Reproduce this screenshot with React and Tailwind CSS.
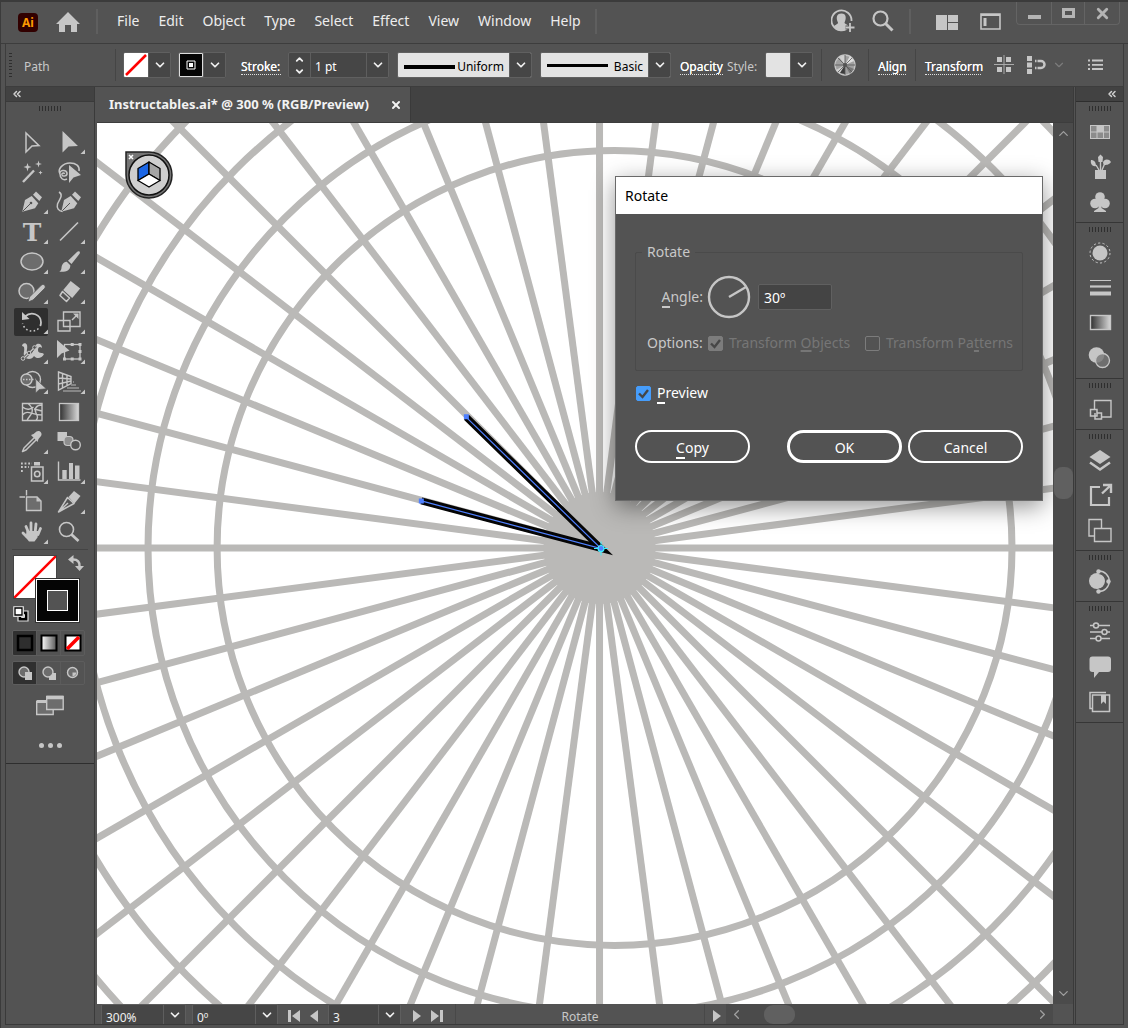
import React from 'react';
import { ChevronDown, ChevronUp, ChevronLeft, ChevronRight, ChevronsLeft, X } from 'lucide-react';

const INK = '#c6c6c6';

const rays = Array.from({ length: 48 }, (_, i) => {
  const a = (i * 7.5 * Math.PI) / 180;
  return [599.5 + 900 * Math.cos(a), 547.5 + 900 * Math.sin(a)];
});

const rings = [397, 466, 535, 604, 673];

const menus = ['File', 'Edit', 'Object', 'Type', 'Select', 'Effect', 'View', 'Window', 'Help'];

const penBody = 'M8.3 23.7 L11 12 L17.7 8 L24.3 15.3 L21 20.3 Z';
const penCap = 'M19 6.7 L22 3.5 L28 9.3 L25.3 13 Z';

// each drawing sits in a 34 x 28 box
const tools = [
  { name: 'Selection', art: <path d="M12 5v19l6-6 7-.4z" fill="none" strokeWidth="1.5" /> },
  { name: 'Direct Selection', more: true, art: <path d="M11.5 3v21.5l6-6 9.5-.5z" stroke="none" /> },
  {
    name: 'Magic Wand',
    art: (
      <>
        <path d="M9 24 20 12.5" strokeWidth="2.4" />
        <path d="m13.5 5 1 3 3 1-3 1-1 3.500-1-3.500-3-1 3-1zM24.500 2.500l.8 2.700 2.700.8-2.700.8-.8 2.700-.8-2.700L21 6l2.700-.8zM26.500 12.500l.6 1.500 1.500.6-1.500.6-.6 1.500-.6-1.500-1.500-.6 1.500-.6z" stroke="none" />
      </>
    ),
  },
  {
    name: 'Lasso',
    art: (
      <>
        <path d="M9 16c-3-5 3-11 10-11 6 0 10 3 9 8M9 16c-1-4 6-5 7-1 .5 3-4 4-5 2-.6-2 2-2.500 2.500-1M9 16c0 4 3 7 7 5" fill="none" strokeWidth="1.500" />
        <path d="M18 7v18l4.500-5.500 7.500-2.500z" stroke="none" />
      </>
    ),
  },
  {
    name: 'Pen',
    more: true,
    art: (
      <>
        <path d={penBody} stroke="none" />
        <path d={penCap} stroke="none" />
        <path d="m9 23 8-8" stroke="#535353" />
        <circle cx="17" cy="15" r="1.300" fill="#535353" stroke="none" />
      </>
    ),
  },
  {
    name: 'Curvature',
    art: (
      <>
        <g transform="translate(2 0)">
          <path d={penBody} stroke="none" />
          <path d={penCap} stroke="none" />
          <path d="m9 23 8-8" stroke="#535353" />
        </g>
        <path d="M8 4c5 3 0 8-1.500 12-1 4 1 7 5 7.500" fill="none" strokeWidth="1.500" />
      </>
    ),
  },
  {
    name: 'Type',
    more: true,
    art: <text x="18" y="23" textAnchor="middle" fontFamily="'DejaVu Serif', serif" fontWeight="bold" fontSize="25" stroke="none">T</text>,
  },
  { name: 'Line Segment', more: true, art: <path d="M9 22.500 27 4.500" strokeWidth="1.600" /> },
  { name: 'Ellipse', more: true, art: <ellipse cx="18" cy="13.500" rx="11" ry="8.500" fill="#6d6d6d" strokeWidth="1.500" /> },
  {
    name: 'Paintbrush',
    more: true,
    art: <path d="M28.500 3.500c.8.800.3 2-.3 2.700L20.500 16 17 12.700l9-8.700c.8-.8 1.800-1.200 2.500-.5zM15.800 13.800l3.500 3.500c.2 4-3 7-11 6.500 3-2 1.500-4 3-7 1-2 3-3.200 4.500-3z" stroke="none" />,
  },
  {
    name: 'Shaper',
    more: true,
    art: (
      <>
        <circle cx="12.500" cy="13" r="7.500" fill="#6d6d6d" strokeWidth="1.500" />
        <path d="m14 24 1.500-5L27.500 7c2-1.500 4.500.5 3.500 3L19 22z" stroke="#535353" strokeWidth=".8" />
      </>
    ),
  },
  {
    name: 'Eraser',
    more: true,
    art: (
      <>
        <path d="m19.700 3 9.500 7.500-8 9.500-9-8z" stroke="none" />
        <path d="m11.500 13.500 7 6.500-3 3.500-6.500-6z" fill="none" strokeWidth="1.500" strokeLinejoin="round" />
      </>
    ),
  },
  {
    name: 'Rotate',
    more: true,
    active: true,
    art: (
      <>
        <path d="M11 8.500c6-5.500 16-2.500 16 6 0 1.500-.3 2.500-.8 3.500" fill="none" strokeWidth="1.800" />
        <path d="M24.500 20.500c-5 5-14 2.500-16-5" fill="none" strokeWidth="1.600" strokeDasharray="1.600 2.300" />
        <path d="M8 4v8l7.500-1z" stroke="none" />
      </>
    ),
  },
  {
    name: 'Scale',
    more: true,
    art: (
      <>
        <path d="M12.500 12.500v-8.500h16.500v14.500h-10M7 12.500h12v10.500H7zM12.500 12.500v6h6.500" fill="none" strokeWidth="1.400" />
        <path d="m21 12 5-5" strokeWidth="1.500" />
        <path d="M22 5.500h5.500V11z" stroke="none" />
      </>
    ),
  },
  {
    name: 'Width',
    more: true,
    art: (
      <>
        <path d="M8 8c0-3 4-4 5-1 1 4-2 8 2 9 5 1 4-8 8-10 3-1 5 1 5 4-2-2-4-1-4 2 0 4 4 2 6 4-2 5-8 5-10 2-2 4-8 4-10 0-1-3 1-6 0-9-1-1-2-1-2-1z" stroke="none" />
        <path d="M9 21 22 8" stroke="#535353" strokeWidth="3" />
        <path d="M9 21 20 10" strokeWidth="1.300" />
        <circle cx="9" cy="20.500" r="1.800" fill="#535353" />
        <circle cx="15" cy="15" r="1.800" fill="#535353" />
        <circle cx="20.500" cy="9.500" r="1.800" fill="#535353" />
      </>
    ),
  },
  {
    name: 'Free Transform',
    more: true,
    art: (
      <>
        <rect x="13.500" y="6.500" width="15.500" height="14.500" fill="none" strokeWidth="1.300" />
        <path d="M12 19.500h3v3h-3zM27.500 19.500h3v3h-3zM27.500 5h3v3h-3zM19.700 5h3v3h-3zM19.700 19.500h3v3h-3zM27.500 12h3v3h-3z" stroke="none" />
        <path d="M6 2v18l4.500-4.500 8-3z" stroke="none" />
      </>
    ),
  },
  {
    name: 'Shape Builder',
    more: true,
    art: (
      <>
        <circle cx="18.500" cy="11.500" r="8" fill="none" strokeWidth="1.400" />
        <circle cx="12.500" cy="11.500" r="5.500" fill="#6d6d6d" strokeWidth="1.400" />
        <path d="M9 11.500h13" strokeWidth="1.400" strokeDasharray="1.500 1.500" />
        <path d="M21.700 11v14l3.500-3.500 7-.8z" stroke="#535353" strokeWidth=".6" />
      </>
    ),
  },
  {
    name: 'Perspective Grid',
    more: true,
    art: (
      <>
        <path d="m7.500 4 12.500 4.500v7L7.500 22zM11.500 5.500v14.500M16 7v10.500M7.500 10l12.500 1M7.500 16l12.500-3" fill="none" strokeWidth="1.400" />
        <path d="M20 17h5M16 20h12M12 23h18M22 14h1" stroke="#989898" strokeWidth="1.300" />
      </>
    ),
  },
  {
    name: 'Mesh',
    art: (
      <path d="M8.500 5.500h19.500v17H8.500zM14 5.500c4 3 5 6 4 9s-4 5-5 8M28 7c-6 0-8 4-6 8s2 5 0 7.500M8.500 9c5 4 8 2 11 0M8.500 17c5-6 9 0 19.500 0M20 11l8 2" fill="none" strokeWidth="1.400" />
    ),
  },
  { name: 'Gradient', art: <rect x="8.500" y="5.500" width="19" height="17" fill="url(#fade)" strokeWidth="1.300" /> },
  {
    name: 'Eyedropper',
    more: true,
    art: (
      <>
        <path d="m20 10-10 10-1.500 3.500 3.500-1.500 10-10" fill="none" strokeWidth="1.500" strokeLinejoin="round" />
        <path d="m17 7 2.500-1 3-2.500c3-2 6.500 1.500 4.500 4.500L24.500 11l-1 3z" stroke="none" />
      </>
    ),
  },
  {
    name: 'Blend',
    art: (
      <>
        <path d="M6.500 4h9.500v9h-9.500z" stroke="none" />
        <rect x="13" y="8.500" width="9" height="9" rx="3.500" fill="#8e8e8e" strokeWidth="1.200" />
        <circle cx="24.500" cy="17" r="4.800" fill="#535353" strokeWidth="1.400" />
      </>
    ),
  },
  {
    name: 'Symbol Sprayer',
    more: true,
    art: (
      <>
        <rect x="17.500" y="9" width="11.500" height="14" fill="none" strokeWidth="1.500" />
        <path d="M20 7.500V4h6v3.500z" stroke="none" />
        <circle cx="23.200" cy="16" r="2.700" fill="none" strokeWidth="1.600" />
        <path d="M7 5.500h11M7 9h8M7 13h2" strokeWidth="1.800" strokeDasharray="1.800 1.800" />
      </>
    ),
  },
  {
    name: 'Column Graph',
    more: true,
    art: (
      <>
        <path d="M7.500 3.500V22h22" fill="none" strokeWidth="1.400" />
        <path d="M11.300 12h4.400v9h-4.400zM18 5h4v16h-4zM24 7.500h4.500V21H24z" stroke="none" />
      </>
    ),
  },
  {
    name: 'Artboard',
    art: (
      <>
        <path d="M12.500 9h10.500l4 4v9.500H12.500z" fill="#6d6d6d" strokeWidth="1.400" />
        <path d="M22.500 9v4.500H27z" stroke="none" />
        <path d="M5.500 9h5.500M12.500 2v5.500" strokeWidth="1.400" />
      </>
    ),
  },
  {
    name: 'Slice',
    more: true,
    art: (
      <>
        <path d="M7.500 24 16.500 9.500 23 15.500zM7.500 24 17 15" fill="none" strokeWidth="1.500" strokeLinejoin="round" />
        <path d="m17.500 9 5.500-6 6.500 5-6 7.500z" stroke="none" />
      </>
    ),
  },
  {
    name: 'Hand',
    more: true,
    art: (
      <>
        <path d="M12 8.500l2.500 6M17 5v9M22 6l-.8 8M26.500 10.500l-2.500 6M9 15l4 4" strokeWidth="2.800" strokeLinecap="round" />
        <path d="M12.500 13h12l-1 6.500-3 4h-5.500L9 16l3 1z" stroke="none" />
      </>
    ),
  },
  {
    name: 'Zoom',
    art: (
      <>
        <circle cx="15.500" cy="11.500" r="7" fill="none" strokeWidth="1.600" />
        <path d="m20.500 16.500 7 6.500" strokeWidth="2.800" />
      </>
    ),
  },
];

// dock drawings sit in a 28 x 28 box
const docks = [
  [
    {
      name: 'Swatches',
      art: (
        <>
          <rect x="4.500" y="7.500" width="19" height="13" fill="#8c8c8c" />
          <path d="M11 8h6v6h-6z" stroke="none" />
          <path d="M4.500 14h19M11 8v12M17.500 8v12" />
        </>
      ),
    },
    {
      name: 'Brushes',
      art: (
        <>
          <path d="M9 17h11v9H9zM5 7c3 0 5 2 5 6C7 14 4 11 5 7zM12 4l2.500-2.500L17 4l-.5 5h-4zM17 10c0-4 6-5 8-1-2 3-5 3-7 3z" stroke="none" />
          <path d="M10 12l3 5M14.500 7v10M19 10l-3 7" strokeWidth="1.400" />
        </>
      ),
    },
    {
      name: 'Symbols',
      art: (
        <>
          <circle cx="14" cy="9" r="4.800" stroke="none" />
          <circle cx="9" cy="15.500" r="4.800" stroke="none" />
          <circle cx="19" cy="15.500" r="4.800" stroke="none" />
          <path d="M12.500 10h3v10l4.500 3v1H8v-1l4.500-3z" stroke="none" />
        </>
      ),
    },
  ],
  [
    {
      name: 'Appearance',
      art: (
        <>
          <circle cx="14" cy="14" r="7.500" stroke="none" />
          <circle cx="14" cy="14" r="10" fill="none" strokeDasharray="2.200 2.290" />
        </>
      ),
    },
    {
      name: 'Stroke',
      art: (
        <>
          <path d="M4 6.500h21" />
          <path d="M4 12.500h21" strokeWidth="2.200" />
          <path d="M4 19.500h21" strokeWidth="4" />
        </>
      ),
    },
    { name: 'Gradient', art: <rect x="4.500" y="6.500" width="20" height="14" fill="url(#fade)" strokeWidth="1.400" /> },
    {
      name: 'Transparency',
      art: (
        <>
          <circle cx="10.500" cy="11" r="7.800" stroke="none" />
          <circle cx="16.500" cy="16.500" r="7" fill="#777777" fillOpacity=".8" strokeWidth="1.300" />
        </>
      ),
    },
  ],
  [
    {
      name: 'Asset Export',
      art: (
        <>
          <path d="M8.500 14V5.500h16.500v16.500H16" fill="none" strokeWidth="1.400" />
          <path d="M4.500 14.500h6.500v6.500H4.500zM9 18v6h6.500v-6h-4.500" fill="none" strokeWidth="1.500" />
        </>
      ),
    },
  ],
  [
    {
      name: 'Layers',
      art: (
        <>
          <path d="m14 4 10.500 7L14 18 3.500 11z" stroke="none" />
          <path d="m4 16.500 10 7 10-7" fill="none" strokeWidth="2.500" />
        </>
      ),
    },
    {
      name: 'Export',
      art: (
        <>
          <path d="M14 6H5v18h18v-8" fill="none" strokeWidth="2.200" />
          <path d="m16 12.500 8.500-8M17 4h8v8" fill="none" strokeWidth="2.400" />
        </>
      ),
    },
    {
      name: 'Artboards',
      art: (
        <>
          <path d="M3 3.500h12.500v16.500H3z" fill="none" strokeWidth="1.400" />
          <path d="M8.500 12.500H25v13H8.500z" fill="#535353" strokeWidth="1.400" />
        </>
      ),
    },
  ],
  [
    {
      name: 'CC Libraries',
      art: (
        <>
          <circle cx="11" cy="14" r="8" stroke="none" />
          <path d="M13 4.500a9.800 9.800 0 0 1 0 19.500" fill="none" stroke="#535353" strokeWidth="5" />
          <path d="M13 4a10 10 0 0 1 0 20.500" fill="none" strokeWidth="1.500" />
          <circle cx="12.500" cy="4.500" r="2.200" stroke="none" />
          <circle cx="22.500" cy="14.500" r="2.200" stroke="none" />
          <circle cx="12.500" cy="24.500" r="2.200" stroke="none" />
        </>
      ),
    },
  ],
  [
    {
      name: 'Properties',
      art: (
        <>
          <path d="M4 7.500h20M4 14h20M4 20.500h20" strokeWidth="1.400" />
          <circle cx="10" cy="7.500" r="2.500" fill="#535353" strokeWidth="1.500" />
          <circle cx="18.500" cy="14" r="2.500" fill="#535353" strokeWidth="1.500" />
          <circle cx="12.500" cy="20.500" r="2.500" fill="#535353" strokeWidth="1.500" />
        </>
      ),
    },
    { name: 'Comments', art: <path d="M6.500 3.500h15.500a3 3 0 0 1 3 3V16a3 3 0 0 1-3 3H13l-5 6v-6H6.500a3 3 0 0 1-3-3V6.500a3 3 0 0 1 3-3z" stroke="none" /> },
    {
      name: 'Libraries',
      art: (
        <>
          <path d="M20 4.500H4v16h2.500M6.500 7H23.500v16.500H6.500z" fill="none" strokeWidth="1.500" />
          <path d="M15 7h5v9l-2.500-2.500-2.500 2.500z" stroke="none" />
        </>
      ),
    },
  ],
];

const Grip = () => (
  <span className="flex h-[5px] justify-center gap-[2px]">
    {Array.from({ length: 8 }, (_, i) => (
      <span key={i} className="w-px bg-[#2e2e2e]" />
    ))}
  </span>
);

const Rule = () => <span className="h-8 w-px shrink-0 bg-[#454545]" />;

const Chevron = () => (
  <span className="pointer-events-none absolute inset-y-0 right-0 flex w-[22px] items-center justify-center border-l border-[#5e5e5e] bg-[#464646]">
    <ChevronDown size={14} strokeWidth={3} className="text-[#f0f0f0]" />
  </span>
);

const frame = 'relative flex h-[26px] shrink-0 overflow-hidden rounded-xs border border-[#606060]';

const SwatchButton = ({ label, children }) => (
  <button aria-label={label} className={`${frame} w-12 bg-[#464646]`}>
    <span className="flex h-full w-[24px] items-center justify-center">{children}</span>
    <Chevron />
  </button>
);

const StrokeSelect = ({ label, value, width, line }) => (
  <div className={`${frame} ${width} items-center bg-[#e3e3e3]`}>
    <span className={`${line} pointer-events-none absolute left-[6px] bg-black`} />
    <select aria-label={label} className="h-full w-full appearance-none pt-1 pr-[27px] text-right text-xs text-black [text-align-last:right]">
      <option>{value}</option>
    </select>
    <Chevron />
  </div>
);

const StatusSelect = ({ label, value, width }) => (
  <div className={`relative flex h-5 shrink-0 overflow-hidden rounded-t-xs border border-b-0 border-[#5e5e5e] bg-[#464646] ${width}`}>
    <select aria-label={label} className="w-full appearance-none pt-[5px] pl-1 text-xs leading-4 text-[#f0f0f0]">
      <option>{value}</option>
    </select>
    <Chevron />
  </div>
);

const TitleBar = () => (
  <header className="flex h-[42px] shrink-0 items-start border-b border-[#3d3d3d] pr-[8px] pl-[17px]">
    <span className="mt-[11px] flex h-[19px] w-5 items-center justify-center rounded bg-[#310000] text-[12px] font-bold text-[#ff9a00]">Ai</span>
    <button aria-label="Home" className="mt-[10px] ml-[18px]">
      <svg width="24" height="20" fill={INK}>
        <path d="M12 0 24 12h-3v8h-6v-7H9v7H3v-8H0z" />
      </svg>
    </button>
    <span className="mt-[7px] ml-4 h-[25px] w-[2px] bg-[#5f5f5f]" />
    <nav className="mt-2 ml-[19px] flex gap-[19px] text-[14px] leading-[22px] text-[#ededed]">
      {menus.map((m) => (
        <button key={m}>{m}</button>
      ))}
    </nav>
    <span className="mt-[7px] ml-[14px] h-[25px] w-[2px] bg-[#5f5f5f]" />
    <div className="ml-auto flex items-start">
      <button aria-label="Account" className="mt-[7px]">
        <svg width="24" height="24" fill="none" stroke={INK}>
          <path d="M18 18A10 10 0 1 1 20.500 12" strokeWidth="1.800" />
          <path d="M10.500 4.500c5 0 5 5 3 9 0 2 3 1 4 4l-4 4H7l-4-4c1-2 4-2 4-4-2-4-2-9 3.500-9z" fill={INK} stroke="none" />
          <path d="M19 14v9M14.500 18.500h9" stroke="#535353" strokeWidth="4" />
          <path d="M19 14v9M14.500 18.500h9" strokeWidth="1.800" />
        </svg>
      </button>
      <button aria-label="Search" className="mt-[8px] ml-[17px]">
        <svg width="22" height="22" fill="none" stroke={INK}>
          <circle cx="8.500" cy="8.500" r="7" strokeWidth="2.200" />
          <path d="m13.500 13.500 7 7" strokeWidth="3" />
        </svg>
      </button>
      <span className="mt-[7px] ml-[15px] h-[25px] w-[2px] bg-[#5f5f5f]" />
      <button aria-label="Arrange documents" className="mt-[13px] ml-[25px]">
        <svg width="22" height="15" fill={INK}>
          <path d="M0 0h11v15H0zM12 0h10v7H12zM12 8h10v7H12z" />
        </svg>
      </button>
      <button aria-label="Workspace" className="mt-[11px] ml-[22px]">
        <svg width="21" height="17" fill="none" stroke={INK}>
          <path d="M1 1h19v15H1z" strokeWidth="1.600" />
          <path d="M1 2h19" strokeWidth="2" />
          <path d="M3.500 5h3v8h-3z" fill={INK} stroke="none" />
        </svg>
      </button>
      <div className="ml-[15px] flex h-[23px] rounded-b border border-t-0 border-[#646464] text-[#b4b4b4]">
        <button aria-label="Minimize" className="flex w-[34px] items-center justify-center"><span className="mt-2 h-1 w-[13px] bg-current" /></button>
        <button aria-label="Maximize" className="flex w-[34px] items-center justify-center border-x border-[#646464]"><span className="h-[10px] w-[13px] border-[3px] border-current" /></button>
        <button aria-label="Close" className="flex w-[34px] items-center justify-center"><X size={17} strokeWidth={4} /></button>
      </div>
    </div>
  </header>
);

const linkStyle = 'mt-[5px] border-b border-dotted border-[#e0e0e0] leading-[14px] text-white whitespace-nowrap [text-shadow:0_0_0.6px_#fff]';

const ControlBar = () => (
  <section className="mr-1 ml-[4px] flex h-[43px] shrink-0 items-center border-x border-b border-[#3d3d3d] pl-[3px] text-xs text-[#c8c8c8]">
    <span className="flex h-6 w-[3px] flex-col justify-between">
      {Array.from({ length: 8 }, (_, i) => (
        <span key={i} className="h-px bg-[#2e2e2e]" />
      ))}
    </span>
    <span className="mt-[3px] ml-3 w-[91px]">Path</span>
    <Rule />
    <div className="ml-[7px] flex gap-[7px]">
      <SwatchButton label="Fill">
        <svg width="24" height="24"><path d="M0 0h24v24H0z" fill="#fff" /><path d="M2 22 22 2" stroke="#f00" strokeWidth="2.500" /></svg>
      </SwatchButton>
      <SwatchButton label="Stroke colour">
        <svg width="24" height="24"><path d="M.5.5h23v23H.5z" fill="#050505" stroke="#ddd" /><path d="M8 8h8v8H8z" fill="#050505" stroke="#fff" /><path d="M10 10h4v4h-4z" fill="#fff" /></svg>
      </SwatchButton>
    </div>
    <label htmlFor="weight" className={`ml-[15px] w-10 ${linkStyle}`}>Stroke:</label>
    <div className={`${frame} ml-[7px] w-[101px] bg-[#464646]`}>
      <span className="flex w-[22px] flex-col items-center justify-center gap-px border-r border-[#5e5e5e] text-[#f0f0f0]">
        <button aria-label="Increase stroke"><ChevronUp size={11} strokeWidth={4} /></button>
        <button aria-label="Decrease stroke"><ChevronDown size={11} strokeWidth={4} /></button>
      </span>
      <select id="weight" className="flex-1 appearance-none pt-[3px] pl-1 text-xs text-white"><option>1 pt</option></select>
      <Chevron />
    </div>
    <div className="ml-2 flex gap-2">
      <StrokeSelect label="Width profile" value="Uniform" width="w-[135px]" line="top-[12px] h-1 w-[51px]" />
      <StrokeSelect label="Brush" value="Basic" width="w-[131px]" line="top-[11px] h-[3px] w-[61px]" />
    </div>
    <a href="#opacity" className={`ml-[9px] w-[43px] ${linkStyle}`}>Opacity</a>
    <span className="mt-[3px] ml-1 w-[38px]">Style:</span>
    <SwatchButton label="Graphic style"><span className="h-full w-full bg-[#e3e3e3]" /></SwatchButton>
    <span className="w-2" />
    <Rule />
    <button aria-label="Recolor artwork" className="mx-3">
      <svg width="22" height="22" viewBox="-11 -11 22 22">
        <circle r="10" fill="#a0a0a0" stroke="#c6c6c6" strokeWidth="1.300" />
        <path d="M0 0 5-9 9-4z" fill="#ddd" />
        <path d="M0 0 0-10-6-8zM0 0-5 8-9 5z" fill="#d0d0d0" />
        <path d="M0 0 0 9-5 8z" fill="#3c3c3c" />
        <path d="M0 0 9 4 5 9z" fill="#777" />
        <path d="M-10 0H10M0-10V10M-7-7 7 7M-7 7 7-7" stroke="#555" strokeWidth=".8" />
        <circle r="2" fill="#535353" />
      </svg>
    </button>
    <Rule />
    <a href="#align" className={`mx-[9px] w-[28px] ${linkStyle}`}>Align</a>
    <Rule />
    <a href="#transform" className={`ml-[9px] w-[56px] ${linkStyle}`}>Transform</a>
    <button aria-label="Isolate" className="ml-[13px]">
      <svg width="20" height="20" fill={INK}>
        <path d="M3 2h5v5H3zM12 2h5v5h-5zM3 12h5v5H3zM12 12h5v5h-5z" />
        <path d="M0 9.500h20M10 0v19" stroke="#aaa" />
      </svg>
    </button>
    <button aria-label="Snap" className="ml-[13px]">
      <svg width="20" height="20" fill={INK}>
        <path d="M0 1h5v5H0zM0 7.500h5v5H0zM0 14h5v5H0z" />
        <path d="M8 6h6a3.500 3.500 0 0 1 0 7H8" fill="none" stroke={INK} strokeWidth="2.500" />
        <path d="M10 4v11" stroke="#535353" />
      </svg>
    </button>
    <ChevronDown size={14} className="ml-[5px] text-[#7c7c7c]" />
    <button aria-label="Panel menu" className="mr-5 ml-auto">
      <svg width="15" height="12" stroke={INK} strokeWidth="1.800">
        <path d="M0 1.500h2M4 1.500h11M0 5.800h2M4 5.800h11M0 10h2M4 10h11" />
      </svg>
    </button>
  </section>
);

const ModeCell = ({ label, active, children }) => (
  <button aria-label={label} className={`flex flex-1 items-center justify-center border-r border-[#5b5b5b] last:border-r-0 ${active ? 'bg-[#303030]' : ''}`}>
    <svg width="18" height="18" fill={INK} stroke={INK}>{children}</svg>
  </button>
);

const Toolbar = () => (
  <aside className="flex w-[90px] shrink-0 flex-col border-x border-[#3a3a3a]">
    <button aria-label="Collapse tools" className="flex h-[15px] items-center border-b border-[#3a3a3a] bg-[#424242] pl-[5px] text-[#d0d0d0]">
      <ChevronsLeft size={12} strokeWidth={3} />
    </button>
    <div className="flex flex-col border-b border-[#2e2e2e] pt-1 pb-[15px]">
      <Grip />
      <div className="mt-[17px] ml-2 grid w-[71px] grid-cols-2 gap-x-[3px] gap-y-[2px]">
        {tools.map((t) => (
          <button key={t.name} aria-label={t.name} className={`rounded-xs ${t.active ? 'bg-[#2f2f2f]' : ''}`}>
            <svg viewBox="0 0 34 28" className="h-7 w-full" fill={INK} stroke={INK}>
              {t.art}
              {t.more && <path d="M34 21.500V26h-4.500z" stroke="none" />}
            </svg>
          </button>
        ))}
      </div>
      <span className="mx-[6px] mt-[3px] h-px bg-[#444]" />
      <div className="relative mt-[5px] ml-[7px] h-[70px]">
        <button aria-label="Fill none" className="absolute top-0 left-0 h-11 w-11 border border-[#444] bg-white">
          <svg viewBox="0 0 42 42" className="h-full w-full"><path d="M0 42 42 0" stroke="#f00" strokeWidth="2.500" /></svg>
        </button>
        <button aria-label="Stroke black" className="absolute top-[23px] left-[22px] flex h-[45px] w-[45px] items-center justify-center border border-[#333] bg-white p-px">
          <span className="flex h-full w-full items-center justify-center bg-[#050505]"><span className="h-[21px] w-[21px] border border-white bg-[#535353]" /></span>
        </button>
        <button aria-label="Swap fill and stroke" className="absolute top-0 left-[55px]">
          <svg width="16" height="18" fill={INK}>
            <path d="M4 4.500c6-.5 8 3 7.500 7" fill="none" stroke={INK} strokeWidth="2.500" />
            <path d="M0 4.500 5.500 0v9zM7 11h9l-4.500 5z" />
          </svg>
        </button>
        <button aria-label="Default fill and stroke" className="absolute top-[51px] left-0">
          <svg width="16" height="16">
            <path d="M5 5h10v10H5z" fill="#000" stroke="#ddd" strokeWidth="1.200" />
            <path d="M8.500 8.500h3v3h-3z" fill="#535353" stroke="#ddd" />
            <path d="M.8.800h9.500v9.500H.8z" fill="#fff" stroke="#ddd" strokeWidth="1.200" />
            <path d="M2 2h7v7H2z" fill="#fff" stroke="#000" strokeWidth="1.300" />
          </svg>
        </button>
      </div>
      <div className="mt-[5px] mr-[9px] ml-[6px] flex h-[26px] overflow-hidden rounded-xs border border-[#5d5d5d]">
        <ModeCell label="Color" active><path d="M2 2h14v14H2z" fill="#2e2e2e" stroke="#000" strokeWidth="2.500" /></ModeCell>
        <ModeCell label="Gradient fill"><path d="M1.500 1.500h15v15h-15z" fill="url(#fadeLight)" stroke="#000" strokeWidth="2" /></ModeCell>
        <ModeCell label="None"><path d="M1.500 1.500h15v15h-15z" fill="#fff" stroke="#000" strokeWidth="2" /><path d="M3 15 15 3" stroke="#f00" strokeWidth="3.500" /></ModeCell>
      </div>
      <div className="mt-[5px] mr-[9px] ml-[6px] flex h-[24px] overflow-hidden rounded-xs border border-[#5d5d5d]">
        <ModeCell label="Draw normal" active><circle cx="8" cy="8" r="5" fill="#6d6d6d" strokeWidth="1.400" /><path d="M9 8h7v8H9z" stroke="none" /></ModeCell>
        <ModeCell label="Draw behind"><path d="M9 9h7v7H9z" stroke="none" /><circle cx="8" cy="8" r="5" fill="#6d6d6d" strokeWidth="1.400" /></ModeCell>
        <ModeCell label="Draw inside"><circle cx="8.500" cy="8.500" r="5" fill="#6d6d6d" strokeWidth="1.400" /><path d="M8.500 8.500h4a5 5 0 0 1-4 4z" stroke="none" /></ModeCell>
      </div>
      <button aria-label="Screen mode" className="mt-[10px] self-center">
        <svg width="28" height="21" fill="#6d6d6d" stroke={INK}>
          <path d="M.7 6.500h16.500v13H.7z" strokeWidth="1.400" />
          <path d="M.7 6.500h16.500" strokeWidth="3" />
          <path d="M10.700 1.500h16.500v13H10.700z" strokeWidth="1.400" />
          <path d="M10.700 2.500h16.500" strokeWidth="3.500" />
        </svg>
      </button>
      <button aria-label="Edit toolbar" className="mt-[27px] flex gap-1 self-center">
        <span className="h-[5px] w-[5px] rounded-full bg-[#c6c6c6]" />
        <span className="h-[5px] w-[5px] rounded-full bg-[#c6c6c6]" />
        <span className="h-[5px] w-[5px] rounded-full bg-[#c6c6c6]" />
      </button>
    </div>
  </aside>
);

const Dock = () => (
  <aside className="flex w-[49px] shrink-0 flex-col border-x border-[#3a3a3a]">
    <button aria-label="Expand panels" className="flex h-[15px] items-center justify-end border-b border-[#2e2e2e] bg-[#424242] pr-[5px] text-[#d0d0d0]">
      <ChevronsLeft size={12} strokeWidth={3} />
    </button>
    {docks.map((group, i) => (
      <div key={i} className="border-b border-[#363636] pt-1 pb-[3px]">
        <Grip />
        <div className="mt-[3px] flex flex-col">
          {group.map((d) => (
            <button key={d.name} aria-label={d.name} className="flex h-[35px] items-center justify-center">
              <svg width="28" height="28" fill={INK} stroke={INK}>{d.art}</svg>
            </button>
          ))}
        </div>
      </div>
    ))}
  </aside>
);

const Artwork = () => (
  <svg viewBox="97 123 956 880" preserveAspectRatio="xMidYMid slice" className="h-full w-full">
    <g stroke="#bab9b7" strokeWidth="7" fill="none">
      {rays.map(([x, y], i) => (
        <line key={i} x1="599.5" y1="547.5" x2={x} y2={y} />
      ))}
      {rings.map((r) => (
        <circle key={r} cx="614.5" cy="547.5" r={r} />
      ))}
    </g>
    <circle cx="599.5" cy="547.5" r="56" fill="#bab9b7" />
    <path d="M466.500 417 601 548 421.500 500.500" fill="none" stroke="#050505" strokeWidth="7" strokeMiterlimit="10" />
    <path d="M466.500 417 601 548 421.500 500.500" fill="none" stroke="#4f80ff" strokeWidth="1.200" />
    <path d="M464 414h5v5h-5zM419 498h5v5h-5z" fill="#4f80ff" />
    <path d="M601 541v14M594 548h14" stroke="#3ff0ff" />
    <circle cx="601" cy="548" r="3" fill="#4f80ff" stroke="#3ff0ff" strokeWidth="1.200" />
  </svg>
);

const pill = 'h-[33px] w-[115px] rounded-full pt-[2px] text-[14px] text-white';

const RotateDialog = () => (
  <div role="dialog" aria-labelledby="dialogTitle" className="absolute top-[53px] left-[518px] w-[428px] border border-[#6a6a6a] bg-[#535353] text-[14px] shadow-[0_6px_22px_rgba(0,0,0,0.42)]">
    <h2 id="dialogTitle" className="flex h-[37px] items-center bg-white pl-[9px] text-black">Rotate</h2>
    <form className="px-[19px] pt-[28px] pb-[37px] leading-5 text-[#c8c8c8]" onSubmit={(e) => e.preventDefault()}>
      <fieldset className="rounded-xs border border-[#4a4a4a] pr-2 pb-[17px] pl-[11px]">
        <legend className="-ml-[5px] px-[5px]">Rotate</legend>
        <div className="mt-[14px] flex h-[42px] items-center">
          <label htmlFor="angle" className="w-[56px] text-right"><span className="border-b-2">A</span>ngle:</label>
          <svg width="44" height="44" className="ml-1" fill="none" stroke={INK}>
            <circle cx="22" cy="22" r="20" strokeWidth="2.400" />
            <path d="m22 22 17-10" strokeWidth="2.400" />
          </svg>
          <input id="angle" defaultValue="30º" className="ml-[7px] h-[26px] w-[74px] rounded-xs border border-[#606060] bg-[#444] px-[5px] text-white" />
        </div>
        <div className="mt-[15px] flex h-5 items-center whitespace-nowrap text-[#767676]">
          <span className="w-[56px] text-[#c8c8c8]">Options:</span>
          <Check id="objects" disabled on box="border-[#7c7c7c] bg-[#7c7c7c]" />
          <label htmlFor="objects" className="ml-[6px] w-[122px]">Transform <u className="decoration-2 underline-offset-2">O</u>bjects</label>
          <span className="w-[9px]" />
          <Check id="patterns" disabled box="border-[#7c7c7c]" />
          <label htmlFor="patterns" className="ml-[6px]">Transform Pa<u className="decoration-2 underline-offset-2">t</u>terns</label>
        </div>
      </fieldset>
      <div className="mt-3 -ml-1 flex items-center text-white">
        <Check id="preview" on box="border-[#469dfb] bg-[#469dfb]" />
        <label htmlFor="preview" className="ml-[6px]"><span className="border-b-2">P</span>review</label>
      </div>
      <div className="mt-[27px] flex">
        <button className={`${pill} border-2 border-white`}><span className="border-b-2">C</span>opy</button>
        <button className={`${pill} mr-[6px] ml-auto border-[3px] border-white`}>OK</button>
        <button className={`${pill} border-2 border-white`}>Cancel</button>
      </div>
    </form>
  </div>
);

function Check({ id, on, disabled, box }) {
  return (
    <span className="relative ml-[5px] flex">
      <input id={id} type="checkbox" defaultChecked={on} disabled={disabled} className={`h-[15px] w-[15px] appearance-none rounded-xs border ${box}`} />
      {on && (
        <svg width="15" height="15" className="pointer-events-none absolute inset-0" fill="none" stroke="#464646" strokeWidth="2.400">
          <path d="m3 7.500 3.500 3.500L12 4" />
        </svg>
      )}
    </span>
  );
}

const ViewWidget = () => (
  <svg width="48" height="48" className="absolute top-7 left-7">
    <path d="M1 1h23a23 23 0 1 1-23 23z" fill="#757575" stroke="#222" strokeWidth="1.500" />
    <circle cx="24" cy="24" r="20" fill="#cfcfcf" stroke="#111" strokeWidth="1.500" />
    <path d="m4 4 4 4m0-4L4 8" stroke="#fff" strokeWidth="1.500" />
    <g stroke="#000" strokeWidth="1.300" strokeLinejoin="round">
      <path d="M24 11 13 17.500v12L24 23z" fill="#1b66e5" />
      <path d="m24 11 11 6.500v12L24 23z" fill="#a5a5a5" />
      <path d="m24 23 11 6.500L24 36l-11-6.500z" fill="#fff" />
    </g>
  </svg>
);

const Document = () => (
  <main className="ml-[2px] flex min-w-0 flex-1 flex-col border-r border-[#3a3a3a]">
    <div className="flex h-9 shrink-0 border-b border-[#3d3d3d] bg-[#424242]">
      <div className="flex items-center border-r border-[#3a3a3a] bg-[#535353] pr-2 pl-3 text-[13px] font-bold text-[#f2f2f2]">
        <span className="w-[272px] whitespace-nowrap">Instructables.ai* @ 300 % (RGB/Preview)</span>
        <button aria-label="Close document" className="ml-[9px]"><X size={12} strokeWidth={4} /></button>
      </div>
    </div>
    <div className="flex min-h-0 flex-1">
      <div className="relative min-w-0 flex-1 overflow-hidden bg-white">
        <Artwork />
        <ViewWidget />
        <RotateDialog />
      </div>
      <div className="flex w-5 shrink-0 flex-col items-center justify-between bg-[#4b4b4b] py-[3px] text-[#a0a0a0]">
        <ChevronUp size={15} />
        <span className="mb-[161px] h-8 w-[19px] rounded-[8px] bg-[#606060]" />
        <ChevronDown size={15} />
      </div>
    </div>
    <div className="flex h-5 shrink-0 items-end overflow-hidden text-xs">
      <div className="ml-1 flex shrink-0 gap-[6px]">
        <StatusSelect label="Zoom level" value="300%" width="w-[85px]" />
        <StatusSelect label="Rotate view" value="0º" width="w-[86px]" />
      </div>
      <div className="mx-[10px] mb-[2px] flex shrink-0 gap-[10px]">
        <button aria-label="First artboard">
          <svg width="12" height="12" fill={INK}><path d="M0 0h3v12H0zM12 0v12L4 6z" /></svg>
        </button>
        <button aria-label="Previous artboard">
          <svg width="8" height="12" fill={INK}><path d="M8 0v12L0 6z" /></svg>
        </button>
      </div>
      <StatusSelect label="Artboard" value="3" width="w-[73px]" />
      <div className="mx-3 mb-[2px] flex shrink-0 gap-[10px]">
        <button aria-label="Next artboard">
          <svg width="8" height="12" fill={INK}><path d="M0 0v12l8-6z" /></svg>
        </button>
        <button aria-label="Last artboard">
          <svg width="12" height="12" fill={INK}><path d="M9 0h3v12H9zM0 0v12l8-6z" /></svg>
        </button>
      </div>
      <span className="h-full w-px bg-[#484848]" />
      <span className="h-[17px] w-[248px] shrink-0 text-center leading-5 text-[#c8c8c8]">Rotate</span>
      <span className="h-full w-px bg-[#484848]" />
      <button aria-label="Status menu" className="mr-[5px] mb-[2px] ml-2">
        <svg width="8" height="12" fill={INK}><path d="M0 0v12l8-6z" /></svg>
      </button>
      <div className="flex h-full flex-1 items-center bg-[#4b4b4b] pl-[3px] text-[#a0a0a0]">
        <ChevronLeft size={15} />
        <span className="ml-5 h-[19px] w-[31px] rounded-[9px] bg-[#606060]" />
        <ChevronRight size={15} className="mr-[3px] ml-auto" />
      </div>
      <span className="w-5 shrink-0" />
    </div>
  </main>
);

const App = () => {
  return (
    <div className="flex h-screen flex-col overflow-hidden border-t-2 border-l border-[#3b3b3b] bg-[#535353] font-['Noto_Sans','Open_Sans',sans-serif]">
      <svg width="0" height="0" className="absolute">
        <defs>
          <linearGradient id="fade"><stop offset="0" stopColor="#303030" /><stop offset="1" stopColor="#d8d8d8" /></linearGradient>
          <linearGradient id="fadeLight"><stop offset="0" stopColor="#fff" /><stop offset="1" stopColor="#555" /></linearGradient>
        </defs>
      </svg>
      <TitleBar />
      <ControlBar />
      <div className="mx-1 mb-[3px] flex min-h-0 flex-1 border-b border-[#3a3a3a]">
        <Toolbar />
        <Document />
        <span className="w-px" />
        <Dock />
      </div>
    </div>
  );
};

export default App;
